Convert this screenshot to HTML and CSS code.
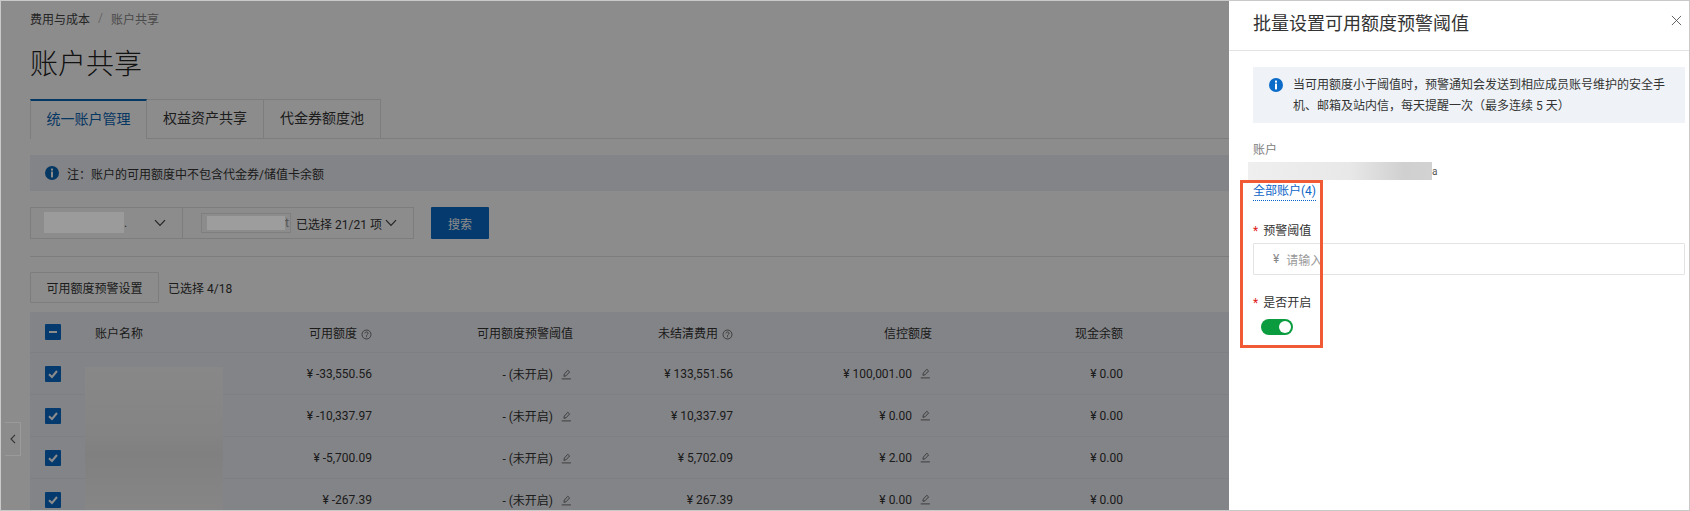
FILE: index.html
```html
<!doctype html>
<html lang="zh">
<head>
  <meta charset="utf-8" />
  <title>账户共享</title>
  <link rel="stylesheet" href="styles.css">
</head>

<body>
  <svg class="sprites" width="0" height="0">
    <symbol id="i-info" viewBox="0 0 14 14">
      <circle cx="7" cy="7" r="7" fill="currentColor"/>
      <rect x="6" y="2.6" width="2" height="2" fill="#fff"/>
      <rect x="6" y="5.6" width="2" height="5.8" fill="#fff"/>
    </symbol>
    <symbol id="i-down" viewBox="0 0 12 8">
      <path d="M1 1.2 6 6.4l5-5.2" fill="none" stroke="currentColor" stroke-width="1.2"/>
    </symbol>
    <symbol id="i-help" viewBox="0 0 12 12">
      <circle cx="6" cy="6" r="4.9" fill="none" stroke="currentColor" stroke-width=".9"/>
      <path d="M4.4 4.8c0-2.1 3.3-2.1 3.3-.1 0 1.3-1.7 1.3-1.7 2.7" fill="none" stroke="currentColor" stroke-width=".9"/>
      <rect x="5.5" y="8" width="1" height="1" fill="currentColor"/>
    </symbol>
    <symbol id="i-edit" viewBox="0 0 12 12">
      <path d="M3.2 8 3.6 5.6 7.4 1.4l2 1.8-3.9 4.2zM.8 10.8h10" fill="none" stroke="currentColor" stroke-width=".9"/>
    </symbol>
    <symbol id="i-check" viewBox="0 0 16 16">
      <path d="M4 8.2 7 11l5-6" fill="none" stroke="#fff" stroke-width="2"/>
    </symbol>
    <symbol id="i-close" viewBox="0 0 12 12">
      <path d="M1 1l10 10M11 1 1 11" fill="none" stroke="currentColor" stroke-width="1"/>
    </symbol>
    <symbol id="i-left" viewBox="0 0 6 10">
      <path d="M5 .8 1 5l4 4.2" fill="none" stroke="currentColor" stroke-width="1.1"/>
    </symbol>
  </svg>

  <div class="app">
    <main class="page">
      <div class="crumbs"><a>费用与成本</a><i>/</i><span>账户共享</span></div>
      <h1>账户共享</h1>

      <div class="tabs">
        <div class="tab active">统一账户管理</div>
        <div class="tab">权益资产共享</div>
        <div class="tab">代金券额度池</div>
      </div>

      <div class="notice">
        <svg class="ico-14"><use href="#i-info"/></svg>
        <span>注&#xFF1A;账户的可用额度中不包含代金券/储值卡余额</span>
      </div>

      <div class="filters">
        <div class="select select-a">
          <span class="mask mask-a"></span><span class="dot">.</span>
          <svg class="chev"><use href="#i-down"/></svg>
        </div>
        <div class="select select-b">
          <span class="tagbox"><span class="mask mask-b"></span><span class="tag-end">t</span></span>
          <span>已选择 21/21 项</span>
          <svg class="chev"><use href="#i-down"/></svg>
        </div>
        <button class="btn-primary">搜索</button>
      </div>

      <div class="divider"></div>

      <div class="toolbar">
        <button class="btn">可用额度预警设置</button>
        <span>已选择 4/18</span>
      </div>

      <div class="table">
        <div class="row head">
          <div class="cell-check"><span class="box"><b></b></span></div>
          <div>账户名称</div>
          <div class="num">可用额度 <svg class="ico-help"><use href="#i-help"/></svg></div>
          <div class="num">可用额度预警阈值</div>
          <div class="num">未结清费用 <svg class="ico-help"><use href="#i-help"/></svg></div>
          <div class="num">信控额度</div>
          <div class="num">现金余额</div>
        </div>
        <div class="row">
          <div class="cell-check"><span class="box"><svg><use href="#i-check"/></svg></span></div>
          <div></div>
          <div class="num">¥ -33,550.56</div>
          <div class="num">- (未开启) <svg class="ico-edit"><use href="#i-edit"/></svg></div>
          <div class="num">¥ 133,551.56</div>
          <div class="num">¥ 100,001.00 <svg class="ico-edit"><use href="#i-edit"/></svg></div>
          <div class="num">¥ 0.00</div>
        </div>
        <div class="row">
          <div class="cell-check"><span class="box"><svg><use href="#i-check"/></svg></span></div>
          <div></div>
          <div class="num">¥ -10,337.97</div>
          <div class="num">- (未开启) <svg class="ico-edit"><use href="#i-edit"/></svg></div>
          <div class="num">¥ 10,337.97</div>
          <div class="num">¥ 0.00 <svg class="ico-edit"><use href="#i-edit"/></svg></div>
          <div class="num">¥ 0.00</div>
        </div>
        <div class="row">
          <div class="cell-check"><span class="box"><svg><use href="#i-check"/></svg></span></div>
          <div></div>
          <div class="num">¥ -5,700.09</div>
          <div class="num">- (未开启) <svg class="ico-edit"><use href="#i-edit"/></svg></div>
          <div class="num">¥ 5,702.09</div>
          <div class="num">¥ 2.00 <svg class="ico-edit"><use href="#i-edit"/></svg></div>
          <div class="num">¥ 0.00</div>
        </div>
        <div class="row">
          <div class="cell-check"><span class="box"><svg><use href="#i-check"/></svg></span></div>
          <div></div>
          <div class="num">¥ -267.39</div>
          <div class="num">- (未开启) <svg class="ico-edit"><use href="#i-edit"/></svg></div>
          <div class="num">¥ 267.39</div>
          <div class="num">¥ 0.00 <svg class="ico-edit"><use href="#i-edit"/></svg></div>
          <div class="num">¥ 0.00</div>
        </div>
      </div>

      <div class="mask mask-names"></div>
      <div class="side-toggle"><svg><use href="#i-left"/></svg></div>
    </main>

    <aside class="drawer">
      <header class="drawer-head">
        <h2>批量设置可用额度预警阈值</h2>
        <svg class="close"><use href="#i-close"/></svg>
      </header>
      <div class="drawer-body">
        <div class="tip">
          <svg class="ico-14"><use href="#i-info"/></svg>
          <p>当可用额度小于阈值时&#xFF0C;预警通知会发送到相应成员账号维护的安全手机、邮箱及站内信&#xFF0C;每天提醒一次&#xFF08;最多连续 5 天&#xFF09;</p>
        </div>

        <div class="field-label plain">账户</div>
        <div class="account"><span class="mask mask-account"></span><span class="tail">a</span></div>
        <div><a class="all-link">全部账户(4)</a></div>

        <div class="field-label first">预警阈值</div>
        <div class="input"><span class="yen">¥</span><span class="ph">请输入</span></div>

        <div class="field-label second">是否开启</div>
        <div class="switch"><span></span></div>
      </div>
    </aside>

    <div class="callout"></div>
  </div>
</body>
</html>
```

FILE: styles.css
```css
* {
  box-sizing: border-box;
}
body {
  margin: 0;
  font-family: Roboto, "Noto Sans CJK SC", sans-serif;
  font-size: 12px;
  color: #333;
  background: #fff;
}
.sprites {
  position: absolute;
}
.app {
  position: relative;
  display: flex;
  height: 511px;
  border: 1px solid #c9c9c9;
  overflow: hidden;
}

/* left page, dimmed by the drawer */
.page {
  position: relative;
  flex: 0 0 1228px;
  padding-left: 29px;
  overflow: hidden;
}
.page::after {
  content: '';
  position: absolute;
  inset: 0;
  background: rgba(0, 0, 0, 0.45);
}
.crumbs {
  display: flex;
  align-items: center;
  gap: 8px;
  height: 34px;
  color: #888;
}
.crumbs a {
  color: #444;
}
.crumbs i {
  font-style: normal;
  color: #bbb;
}
h1 {
  margin: 10px 0 0;
  font-size: 28px;
  font-weight: 300;
  line-height: 40px;
  color: #222;
}
.tabs {
  display: flex;
  height: 40px;
  margin-top: 14px;
  border-bottom: 1px solid #e3e3e3;
}
.tab {
  width: 117px;
  height: 40px;
  border: 1px solid #e3e3e3;
  border-left: 0;
  font-size: 14px;
  line-height: 36px;
  text-align: center;
}
.tab.active {
  height: 40px;
  border-left: 1px solid #e3e3e3;
  border-top: 2px solid #0a64b4;
  border-bottom: 0;
  background: #fff;
  color: #0a64b4;
}
.notice {
  display: flex;
  align-items: center;
  gap: 8px;
  height: 36px;
  margin-top: 16px;
  padding-left: 15px;
  background: #eff1f6;
}
.ico-14 {
  width: 14px;
  height: 14px;
  color: #0a64b4;
}
.ico-help {
  width: 11px;
  height: 11px;
  margin-left: 1px;
  vertical-align: -2px;
  color: #555;
}
.ico-edit {
  width: 11px;
  height: 11px;
  margin: 0 1px 0 5px;
  vertical-align: -1px;
  color: #555;
}
.filters {
  display: flex;
  height: 32px;
  margin-top: 16px;
}
.select {
  display: flex;
  align-items: center;
  height: 32px;
  border: 1px solid #e3e3e3;
}
.select-a {
  width: 153px;
  padding-left: 13px;
}
.select-b {
  width: 232px;
  margin-left: -1px;
  padding-left: 18px;
}
.chev {
  width: 12px;
  height: 8px;
  color: #444;
}
.select-a .chev {
  margin-left: auto;
  margin-right: 16px;
}
.select-b .chev {
  margin-left: 3px;
}
.dot {
  color: #555;
}
.tagbox {
  display: flex;
  align-items: center;
  width: 90px;
  height: 20px;
  margin-right: 5px;
  padding-left: 6px;
  border: 1px solid #e8e8e8;
}
.tag-end {
  color: #999;
}
.btn-primary {
  width: 58px;
  height: 32px;
  margin-left: 17px;
  padding: 0;
  border: 0;
  border-radius: 1px;
  background: #0a6bc8;
  color: #fff;
  font: inherit;
}
.divider {
  height: 1px;
  margin-top: 17px;
  background: #e3e3e3;
}
.toolbar {
  display: flex;
  align-items: center;
  gap: 9px;
  height: 31px;
  margin-top: 15px;
}
.btn {
  width: 129px;
  height: 31px;
  padding: 0;
  border: 1px solid #e3e3e3;
  border-radius: 1px;
  background: #fff;
  color: #333;
  font: inherit;
}
.table {
  margin-top: 9px;
}
.row {
  display: grid;
  grid-template-columns: 65px 120px 157px 201px 160px 199px 191px;
  align-items: center;
  height: 42px;
  border-bottom: 1px solid #e6e8ee;
  background: #eff1f6;
}
.row.head {
  height: 41px;
}
.num {
  text-align: right;
}
.cell-check {
  display: flex;
  padding-left: 15px;
}
.box {
  display: flex;
  align-items: center;
  justify-content: center;
  width: 16px;
  height: 16px;
  border-radius: 1px;
  background: #0a6bc8;
}
.box svg {
  width: 16px;
  height: 16px;
}
.box b {
  width: 8px;
  height: 2px;
  background: #fff;
}

/* blurred-out account names, pasted over the dim layer */
.mask {
  display: block;
  position: relative;
  z-index: 2;
}
.mask-a {
  top: -1px;
  width: 80px;
  height: 21px;
  background: #9b9b9b;
}
.mask-b {
  width: 78px;
  height: 14px;
  margin-left: -1px;
  background: #9d9d9d;
}
.mask-names {
  position: absolute;
  left: 84px;
  top: 366px;
  width: 138px;
  height: 144px;
  background: linear-gradient(#888, #848484 45%, #808080 60%, #868686);
}
.side-toggle {
  position: absolute;
  z-index: 2;
  left: 4px;
  top: 421px;
  display: flex;
  align-items: center;
  justify-content: center;
  width: 16px;
  height: 34px;
  border: 1px solid #9a9a9a;
  border-left: 0;
  color: #333;
}
.side-toggle svg {
  width: 6px;
  height: 10px;
}

/* drawer */
.drawer {
  flex: 1;
  min-width: 0;
  background: #fff;
}
.drawer-head {
  display: flex;
  align-items: center;
  justify-content: space-between;
  height: 50px;
  padding: 0 7px 8px 24px;
  border-bottom: 1px solid #e3e3e3;
}
h2 {
  margin: 0;
  font-size: 18px;
  font-weight: 400;
  color: #333;
}
.close {
  width: 11px;
  height: 11px;
  margin-top: -3px;
  color: #555;
}
.drawer-body {
  padding: 16px 4px 0 24px;
}
.tip {
  display: flex;
  gap: 10px;
  height: 56px;
  padding: 8px 16px;
  background: #eff3f8;
}
.tip .ico-14 {
  flex: none;
  margin-top: 3px;
  color: #0a6bc8;
}
.tip p {
  margin: 0;
  line-height: 21px;
}
.field-label {
  height: 18px;
  line-height: 18px;
}
.field-label.plain {
  margin-top: 18px;
  color: #808080;
}
.field-label.first {
  margin-top: 21px;
}
.field-label.second {
  margin-top: 19px;
}
.field-label.first::before,
.field-label.second::before {
  content: '*';
  margin-right: 5px;
  color: #e02020;
}
.account {
  display: flex;
  align-items: center;
  height: 18px;
  margin: 3px 0 3px -5px;
}
.mask-account {
  width: 184px;
  height: 18px;
  background: linear-gradient(90deg, #efefef, #e8e8e8 55%, #d0d0d0 85%, #d2d2d2);
}
.tail {
  font-size: 10px;
  color: #555;
}
.all-link {
  display: inline-block;
  border-bottom: 1px dotted #0a64c8;
  line-height: 17px;
  color: #0a64c8;
}
.input {
  display: flex;
  align-items: center;
  height: 32px;
  margin-top: 3px;
  padding-left: 19px;
  border: 1px solid #e3e3e3;
  border-radius: 1px;
}
.yen {
  color: #888;
}
.ph {
  margin-left: 7px;
  color: #999;
}
.switch {
  display: flex;
  justify-content: flex-end;
  align-items: center;
  width: 32px;
  height: 16px;
  margin: 7px 0 0 8px;
  padding-right: 2px;
  border-radius: 8px;
  background: #0b9c3f;
}
.switch span {
  width: 12px;
  height: 12px;
  border-radius: 50%;
  background: #fff;
}

/* red annotation box drawn on the screenshot */
.callout {
  position: absolute;
  left: 1239px;
  top: 179px;
  width: 83px;
  height: 168px;
  border: 3px solid #f05a35;
}
```
